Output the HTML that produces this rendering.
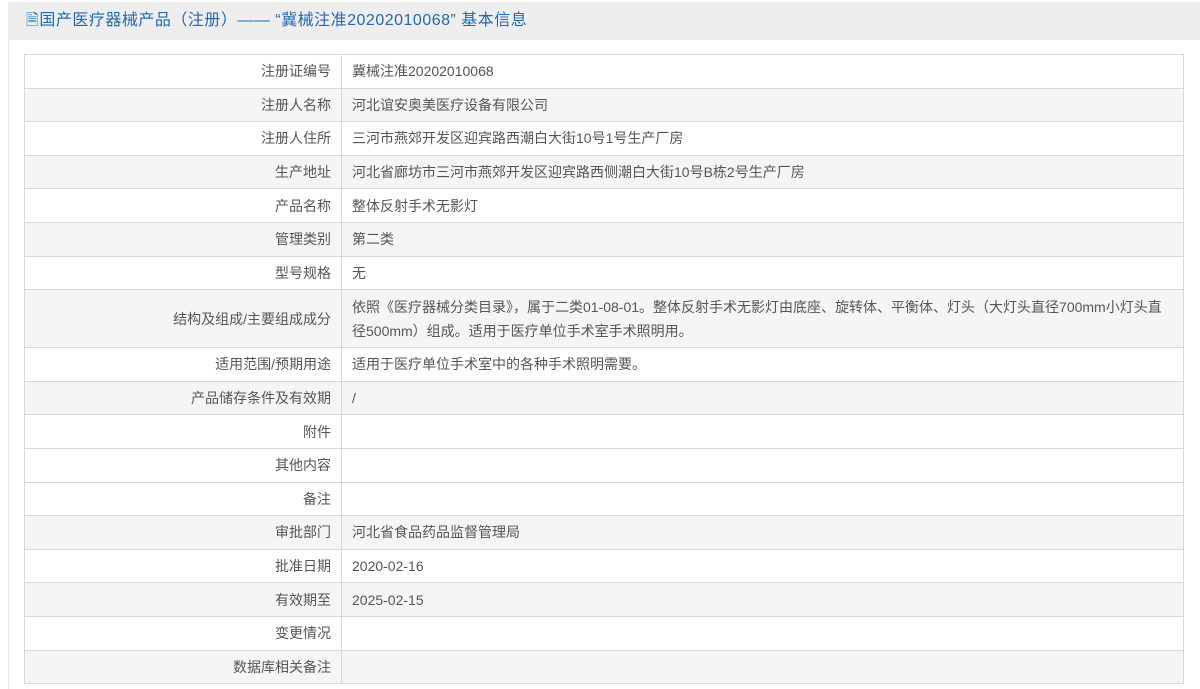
<!DOCTYPE html>
<html><head><meta charset="utf-8"><style>
body{margin:0;background:#fff;width:1200px;height:689px;overflow:hidden;font-family:"Liberation Sans","Noto Sans CJK SC",sans-serif;}
.hd{position:absolute;left:8px;top:2px;width:1192px;height:38px;background:#eeeeee;color:#2468b0;font-size:16px;line-height:38px;padding-left:18px;box-sizing:border-box;white-space:nowrap;letter-spacing:0.5px;}
.wrap{position:absolute;left:8px;top:40px;width:1192px;height:649px;border-left:1px solid #e8e8e8;}
table{position:absolute;left:24px;top:54px;width:1160px;border-collapse:collapse;font-size:14px;color:#555;}
td{border:1px solid #d9d9d9;height:32.6px;padding:0 10px;line-height:24px;}
td.l{width:296px;text-align:right;}
tr.g td{background:#f5f5f5;}
</style></head><body>
<div class="wrap"></div>
<div class="hd">🗎国产医疗器械产品（注册）—— “冀械注准20202010068” 基本信息</div>
<table>
<tr><td class="l">注册证编号</td><td>冀械注准20202010068</td></tr>
<tr class="g"><td class="l">注册人名称</td><td>河北谊安奥美医疗设备有限公司</td></tr>
<tr><td class="l">注册人住所</td><td>三河市燕郊开发区迎宾路西潮白大街10号1号生产厂房</td></tr>
<tr class="g"><td class="l">生产地址</td><td>河北省廊坊市三河市燕郊开发区迎宾路西侧潮白大街10号B栋2号生产厂房</td></tr>
<tr><td class="l">产品名称</td><td>整体反射手术无影灯</td></tr>
<tr class="g"><td class="l">管理类别</td><td>第二类</td></tr>
<tr><td class="l">型号规格</td><td>无</td></tr>
<tr class="g"><td class="l" style="height:57px">结构及组成/主要组成成分</td><td>依照《医疗器械分类目录》，属于二类01-08-01。整体反射手术无影灯由底座、旋转体、平衡体、灯头（大灯头直径700mm小灯头直径500mm）组成。适用于医疗单位手术室手术照明用。</td></tr>
<tr><td class="l">适用范围/预期用途</td><td>适用于医疗单位手术室中的各种手术照明需要。</td></tr>
<tr class="g"><td class="l">产品储存条件及有效期</td><td>/</td></tr>
<tr><td class="l">附件</td><td></td></tr>
<tr><td class="l">其他内容</td><td></td></tr>
<tr><td class="l">备注</td><td></td></tr>
<tr class="g"><td class="l">审批部门</td><td>河北省食品药品监督管理局</td></tr>
<tr><td class="l">批准日期</td><td>2020-02-16</td></tr>
<tr class="g"><td class="l">有效期至</td><td>2025-02-15</td></tr>
<tr><td class="l">变更情况</td><td></td></tr>
<tr class="g"><td class="l">数据库相关备注</td><td></td></tr>
</table>
</body></html>
